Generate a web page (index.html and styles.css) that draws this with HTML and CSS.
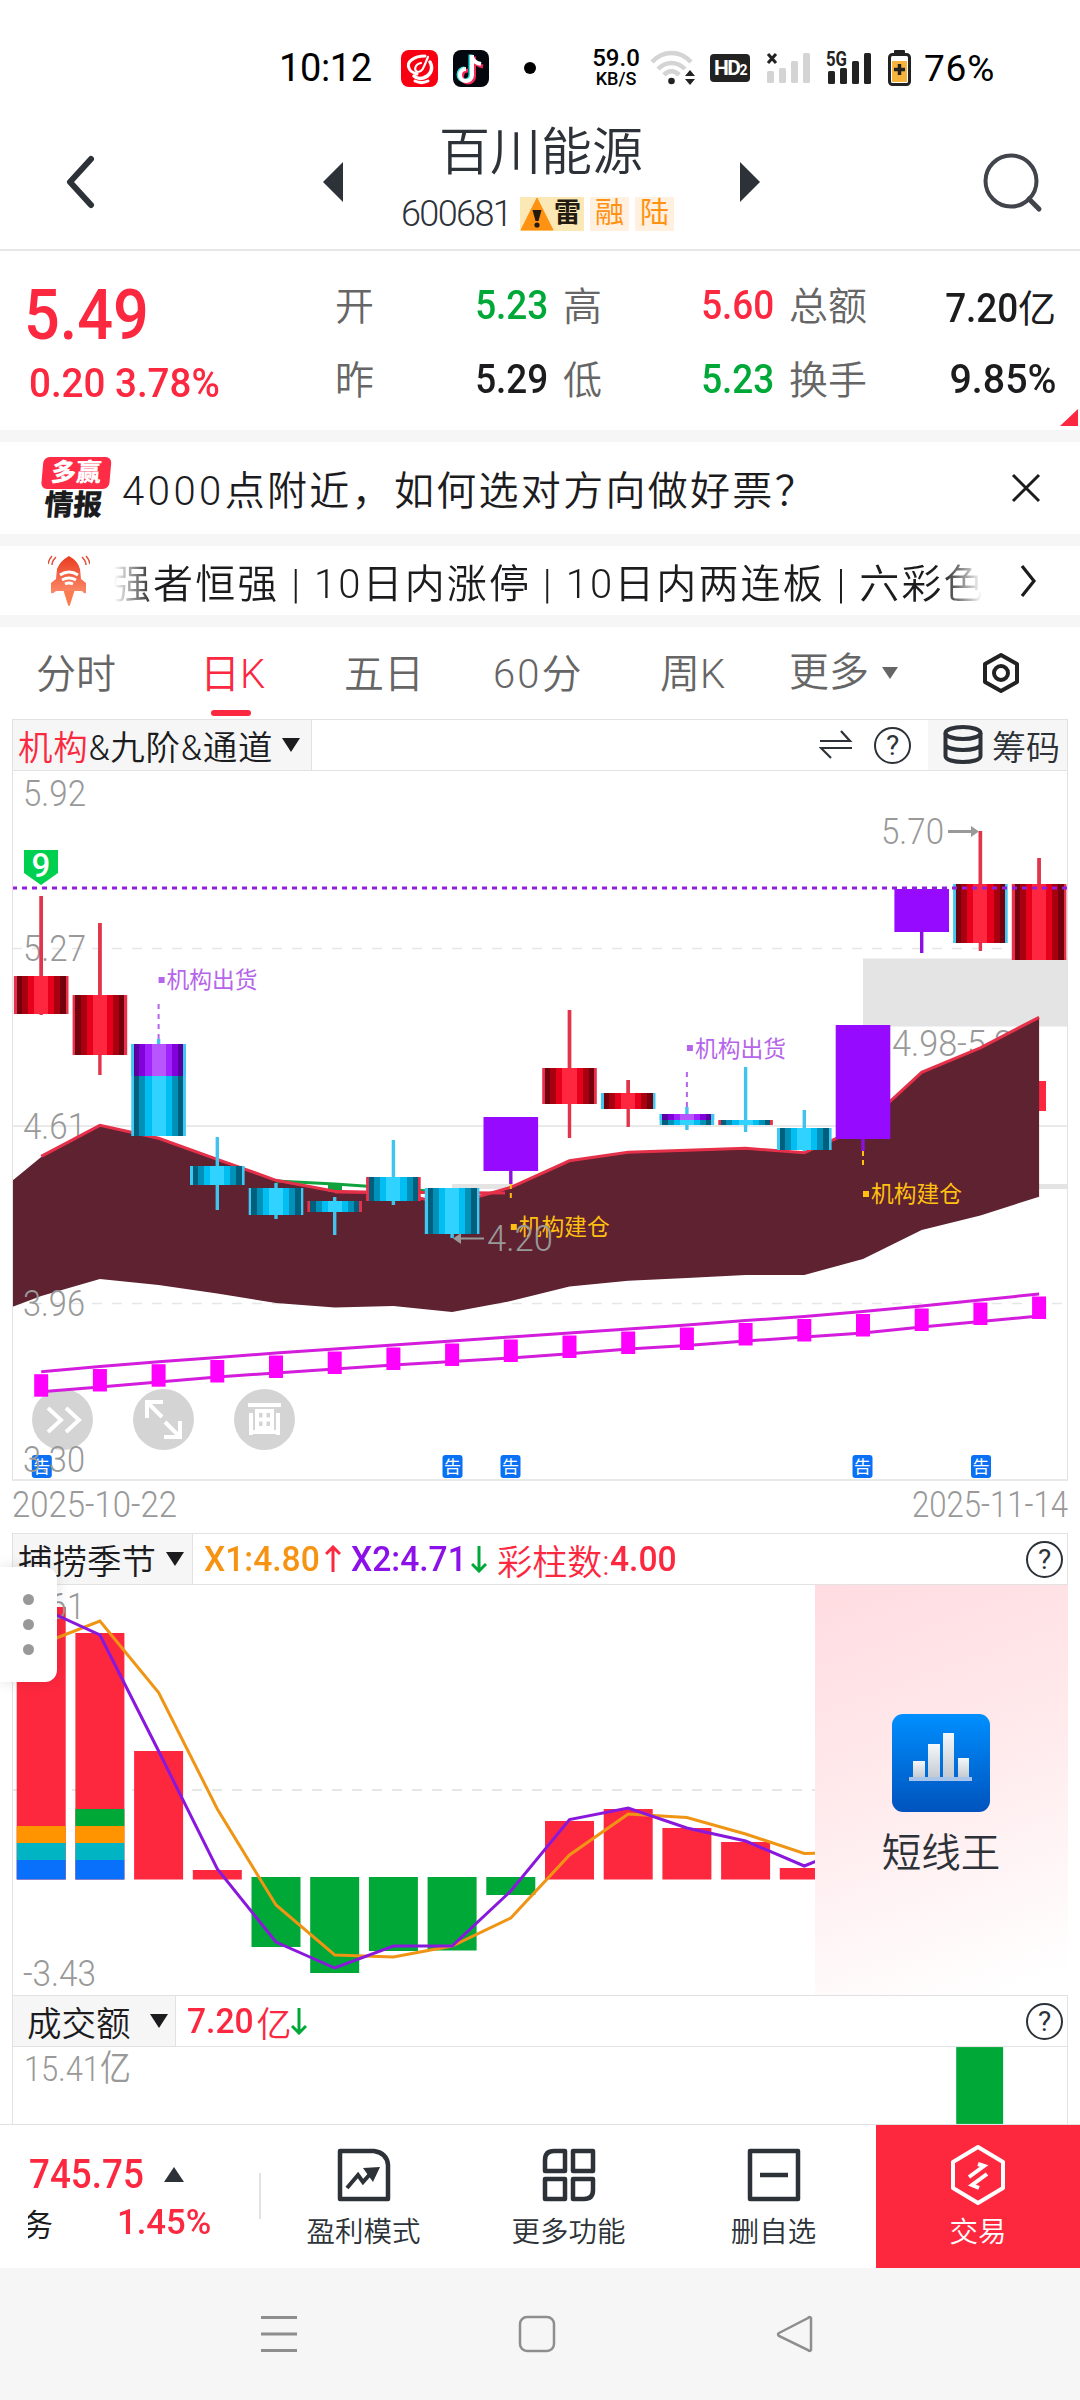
FILE: index.html
```html
<!DOCTYPE html>
<html lang="zh-CN">
<head>
  <meta charset="UTF-8" />
  <title>百川能源 600681</title>
  <link rel="stylesheet" href="styles.css">
</head>
<body>
  <div class="status">
    <span class="time">10:12</span>
    <svg class="app-red" width="37" height="37" viewBox="0 0 37 37">
      <rect width="37" height="37" rx="8" fill="#f80012"/>
      <g fill="none" stroke="#fff" stroke-linecap="round">
        <path d="M24 6C13 6 5 12 8 18c1 4 5 5 8 6" stroke-width="3"/>
        <path d="M29 12c4 7 0 14-7 16-4 1-7 0-9-2" stroke-width="3.500"/>
        <path d="M20 13c-6 1-8 8-3 9 5 0 6-6 10-15" stroke-width="2.200"/>
        <path d="M14 31c4 2 9 2 13 0" stroke-width="3"/>
      </g>
    </svg>
    <svg class="app-tik" width="36" height="37" viewBox="0 0 36 37">
      <rect width="36" height="37" rx="8" fill="#05070f"/>
      <g fill="none" stroke-width="4">
        <path d="M19 5v20a6 6 0 1 1-6-6M19 8c1 4 4 6 9 7" stroke="#2ee6e0" transform="translate(-1.5 -.5)"/>
        <path d="M19 5v20a6 6 0 1 1-6-6M19 8c1 4 4 6 9 7" stroke="#f3295a" transform="translate(2 1.5)"/>
        <path d="M19 5v20a6 6 0 1 1-6-6M19 7c1 4 4 6 9 7" stroke="#fff"/>
      </g>
    </svg>
    <span class="dot"></span>
    <span class="speed"><b>59.0</b><i>KB/S</i></span>
    <svg class="wifi" width="46" height="36" viewBox="0 0 46 36">
      <g fill="none" stroke="#d4d4d4" stroke-width="4.5">
        <path d="M2 12c11-12 28-12 39 0"/>
        <path d="M8 19c8-8 19-8 27 0"/>
        <path d="M14 25c4-5 11-5 15 0"/>
      </g>
      <circle cx="21.500" cy="31" r="3.300" fill="#222"/>
      <path d="M40 20l5 6H35zM40 35l5-6H35z" fill="#222"/>
    </svg>
    <span class="hd">HD<small>2</small></span>
    <svg class="sig" width="44" height="32" viewBox="0 0 44 32">
      <path d="M2 2l8 9M10 2l-8 9" stroke="#222" stroke-width="3"/>
      <g fill="#d4d4d4"><rect x="1" y="19" width="7" height="12" rx="1.500"/><rect x="13" y="16" width="7" height="15" rx="1.500"/><rect x="25" y="9" width="7" height="22" rx="1.500"/><rect x="37" y="1" width="7" height="30" rx="1.500"/></g>
    </svg>
    <svg class="sig5" width="48" height="38" viewBox="0 -4 48 38">
      <text x="1" y="13" class="g5" textLength="21" lengthAdjust="spacingAndGlyphs">5G</text>
      <g fill="#222"><rect x="3" y="18" width="7" height="13" rx="1.500"/><rect x="15" y="15" width="7" height="16" rx="1.500"/><rect x="27" y="8" width="7" height="23" rx="1.500"/><rect x="39" y="0" width="7" height="31" rx="1.500"/></g>
    </svg>
    <svg class="batt" width="23" height="36" viewBox="0 0 23 36">
      <rect x="6" y="0" width="11" height="5" rx="1" fill="#222"/>
      <rect x="1.500" y="4.500" width="20" height="30" rx="3" fill="#fff" stroke="#222" stroke-width="3"/>
      <rect x="4" y="11" width="15" height="21" fill="#f7b43c"/>
      <path d="M11.500 14v11M6 19.500h11" stroke="#222" stroke-width="3.500"/>
    </svg>
    <span class="pct">76%</span>
  </div>

  <header class="header">
    <svg class="back" width="32" height="54" viewBox="0 0 32 54"><path d="M25 4L4 27l21 23" fill="none" stroke="#2c3238" stroke-width="6" stroke-linecap="round" stroke-linejoin="round"/></svg>
    <svg class="prev" width="21" height="42" viewBox="0 0 21 42"><path d="M20 1v40L0 21z" fill="#2c3238"/></svg>
    <div class="title">
      <h1>百川能源</h1>
      <div class="code">
        <span class="code-num">600681</span>
        <span class="tag tag-warn"><svg width="34" height="34" viewBox="0 0 34 34"><path d="M17 1l16 32H1z" fill="#ff9212" stroke="#ff9212" stroke-linejoin="round"/><path d="M12.500 13h9l-3 11h-3z" fill="#231a10"/><circle cx="17" cy="28" r="2.600" fill="#231a10"/></svg><span>雷</span></span>
        <span class="tag">融</span>
        <span class="tag">陆</span>
      </div>
    </div>
    <svg class="next" width="21" height="42" viewBox="0 0 21 42"><path d="M1 1v40l20-20z" fill="#2c3238"/></svg>
    <svg class="search" width="60" height="60" viewBox="0 0 60 60"><g fill="none" stroke="#41444b" stroke-width="4"><circle cx="28" cy="28" r="25.500"/><path d="M46 46l10 10" stroke-width="5" stroke-linecap="round"/></g></svg>
  </header>

  <section class="quote">
    <div class="price">
      <div class="last"><span class="din">5.49</span></div>
      <div class="chg"><span class="din">0.20 3.78%</span></div>
    </div>
    <div class="facts">
      <span class="lb">开</span><span class="val down"><span class="din">5.23</span></span>
      <span class="lb">高</span><span class="val up"><span class="din">5.60</span></span>
      <span class="lb">总额</span><span class="val"><span class="din">7.20</span><em>亿</em></span>
      <span class="lb">昨</span><span class="val"><span class="din">5.29</span></span>
      <span class="lb">低</span><span class="val down"><span class="din">5.23</span></span>
      <span class="lb">换手</span><span class="val"><span class="din wide">9.85%</span></span>
    </div>
    <svg class="corner" width="18" height="18" viewBox="0 0 18 18"><path d="M18 0v17H0z" fill="#fb2840"/></svg>
  </section>

  <div class="banner banner-news">
    <div class="logo"><span class="logo-top">多赢</span><span class="logo-bot">情报</span></div>
    <span class="news"><span class="n4">4000</span>点附近，如何选对方向做好票？</span>
    <svg class="close" width="30" height="30" viewBox="0 0 30 30"><path d="M2 2l26 26M28 2L2 28" stroke="#1c1c1e" stroke-width="3"/></svg>
  </div>

  <div class="banner banner-hot">
    <svg class="rocket" width="42" height="52" viewBox="0 0 42 52">
      <defs><linearGradient id="rk" x2="0" y2="1"><stop offset="0" stop-color="#ea3b20"/><stop offset="1" stop-color="#fb8a68"/></linearGradient></defs>
      <path d="M15 34h12l-5 16q-1 2-2 0z" fill="#fb7b4f"/>
      <path d="M21 1q9 5 11 13l1 10 5 4v10q-2 1-4-2H8q-3 3-5 2V28l5-4 1-10q3-8 12-13z" fill="url(#rk)"/>
      <g fill="none" stroke="#fff" stroke-width="3"><path d="M12 20q9-6 18 0M14 25q7-4 14 0M17 29q4-2 8 0"/></g>
      <g fill="none" stroke="#e0503a" stroke-width="1.500"><path d="M0 9q1-5 4-8M4 10q0-4 4-8M42 9q-1-5-4-8M38 10q0-4-4-8"/></g>
    </svg>
    <div class="ticker">强者恒强 | 10日内涨停 | 10日内两连板 | 六彩色</div>
    <svg class="more" width="17" height="34" viewBox="0 0 17 34"><path d="M2 2l12 15L2 32" fill="none" stroke="#1c1c1e" stroke-width="3.200"/></svg>
  </div>

  <nav class="tabs">
    <span class="tab t1">分时</span>
    <span class="tab t2 active">日K</span>
    <span class="tab t3">五日</span>
    <span class="tab t4">60分</span>
    <span class="tab t5">周K</span>
    <span class="tab t6">更多<i class="tri"></i></span>
    <svg class="gear" width="38" height="42" viewBox="0 0 38 42"><g fill="none" stroke="#222" stroke-width="4"><path d="M19 3l16 9v18l-16 9-16-9V12z" stroke-linejoin="round"/><circle cx="19" cy="21" r="7"/></g></svg>
  </nav>

  <main class="panel">
    <div class="bar">
      <div class="pick pick-main"><span class="up">机构</span>&amp;九阶&amp;通道<i class="tri"></i></div>
      <svg class="swap" width="34" height="32" viewBox="0 0 34 32"><g fill="none" stroke="#2c3238" stroke-width="2.200"><path d="M1 12h30L22 2M33 19H2l10 10"/></g></svg>
      <span class="help">?</span>
      <div class="chips">
        <svg width="40" height="40" viewBox="0 0 40 40"><g fill="none" stroke="#2c3238" stroke-width="4"><ellipse cx="20" cy="8" rx="17.500" ry="6"/><path d="M2.500 8v23c0 8 35 8 35 0V8M2.500 19c0 8 35 8 35 0"/></g></svg>
        <span>筹码</span>
      </div>
    </div>
    <svg id="kline" class="kline" width="1056" height="762" viewBox="12 771 1056 762"></svg>

    <div class="bar bar-top">
      <div class="pick pick-sub">捕捞季节<i class="tri"></i></div>
      <div class="legend">
        <span class="din orange">X1:4.80</span><svg class="arw" width="16" height="28" viewBox="0 0 16 28"><path d="M8 27V2M1 9l7-7 7 7" fill="none" stroke="#fb2840" stroke-width="3"/></svg>
        <span class="din purple">X2:4.71</span><svg class="arw" width="16" height="28" viewBox="0 0 16 28"><path d="M8 1v25M1 19l7 7 7-7" fill="none" stroke="#00a838" stroke-width="3"/></svg>
        <span class="up">彩柱数:</span><span class="din up">4.00</span>
      </div>
      <span class="help">?</span>
    </div>
    <div class="season">
      <svg id="season" width="803" height="409" viewBox="12 1585 803 409"></svg>
      <div class="promo">
        <svg width="98" height="98" viewBox="0 0 98 98">
          <defs>
            <linearGradient id="pb" x2="0" y2="1"><stop offset="0" stop-color="#008fff"/><stop offset="1" stop-color="#0053bd"/></linearGradient>
            <linearGradient id="pw" x2="0" y2="1"><stop offset="0" stop-color="#f4f8fc"/><stop offset="1" stop-color="#c3c9d0"/></linearGradient>
          </defs>
          <rect width="98" height="98" rx="11" fill="url(#pb)"/>
          <g fill="url(#pw)"><rect x="21" y="47" width="12" height="17"/><rect x="36" y="30" width="12" height="34"/><rect x="51" y="19" width="11" height="45"/><rect x="66" y="44" width="11" height="20"/></g>
          <rect x="17" y="63" width="63" height="4" fill="#a9c4ea"/>
        </svg>
        <span>短线王</span>
      </div>
    </div>

    <div class="bar">
      <div class="pick pick-vol">成交额<i class="tri"></i></div>
      <div class="legend">
        <span class="din up">7.20</span><span class="up yi">亿</span><svg class="arw" width="16" height="28" viewBox="0 0 16 28"><path d="M8 1v25M1 19l7 7 7-7" fill="none" stroke="#00a838" stroke-width="3"/></svg>
      </div>
      <span class="help">?</span>
    </div>
    <svg class="volume" width="1056" height="77" viewBox="12 2047 1056 77">
      <rect x="957" y="2047" width="47" height="77" fill="#00a838"/>
      <text x="23" y="2081" class="axis" textLength="107" lengthAdjust="spacingAndGlyphs">15.41亿</text>
    </svg>
  </main>

  <div class="handle"><i></i><i></i><i></i></div>

  <footer class="tools">
    <div class="index">
      <div class="idx-row"><span class="din up">745.75</span><i class="tri-up"></i></div>
      <div class="idx-row2"><span class="cut">务</span><span class="din wide up">1.45%</span></div>
    </div>
    <div class="tool">
      <svg width="54" height="54" viewBox="0 0 54 54"><path d="M3 3h34q13 2 14 14v34H3z" fill="none" stroke="#2c3238" stroke-width="4.500" stroke-linejoin="round"/><path d="M10 40l11-13 5 7 8-9" fill="none" stroke="#2c3238" stroke-width="4"/><path d="M26 20l17-1-7 15z" fill="#2c3238"/></svg>
      <span>盈利模式</span>
    </div>
    <div class="tool">
      <svg width="54" height="54" viewBox="0 0 54 54"><g fill="none" stroke="#2c3238" stroke-width="4.500" stroke-linejoin="round"><path d="M12 3h11v20H3V12q0-9 9-9zM31 3h20v20H31zM3 31h20v20H3zM31 31h20v11q0 9-9 9H31z"/></g></svg>
      <span>更多功能</span>
    </div>
    <div class="tool">
      <svg width="54" height="54" viewBox="0 0 54 54"><path d="M3 3h48v48H3zM13 27h28" fill="none" stroke="#2c3238" stroke-width="4.500" stroke-linejoin="round"/></svg>
      <span>删自选</span>
    </div>
    <div class="tool trade">
      <svg width="56" height="62" viewBox="0 0 56 62"><path d="M28 3l25 15v26L28 59 3 44V18z" fill="none" stroke="#fff" stroke-width="4" stroke-linejoin="round"/><path d="M19 33l15-11-6-2M37 30L22 41l7 3" fill="none" stroke="#fff" stroke-width="4"/></svg>
      <span>交易</span>
    </div>
  </footer>

  <div class="sysnav">
    <svg width="38" height="38" viewBox="0 0 38 38"><path d="M1 2.500h36M1 19h36M1 35.500h36" stroke="#8e8e8e" stroke-width="3"/></svg>
    <svg width="38" height="38" viewBox="0 0 38 38"><rect x="2" y="2" width="34" height="34" rx="7" fill="none" stroke="#8e8e8e" stroke-width="2.500"/></svg>
    <svg width="38" height="38" viewBox="0 0 38 38"><path d="M35 3v32q-1 2-3 0L3 21q-2-2 0-3L32 3q2-2 3 0z" fill="none" stroke="#8e8e8e" stroke-width="2.500"/></svg>
  </div>

  <script>
    const STEP = 58.7;
    const cx = (i) => 41.2 + STEP * i;
    const pts = (ys, x0) => ys.map((y, i) => cx(i + (x0 || 0)).toFixed(1) + "," + y).join(" ");
    const rect = (x, y, w, h, fill) => `<rect x="${x}" y="${y}" width="${w}" height="${h}" fill="${fill}"/>`;
    const line = (x1, y1, x2, y2, c, w, dash) =>
      `<line x1="${x1}" y1="${y1}" x2="${x2}" y2="${y2}" stroke="${c}" stroke-width="${w}"${dash ? ` stroke-dasharray="${dash}"` : ""}/>`;
    const poly = (p, c, w) => `<polyline points="${p}" fill="none" stroke="${c}" stroke-width="${w}"/>`;
    const text = (x, y, s, cls, len) => `<text x="${x}" y="${y}" class="${cls}" textLength="${len}" lengthAdjust="spacingAndGlyphs">${s}</text>`;

    // 柱体渐变: 由深到浅再到深
    function grad(id, c) {
      const cut = [0, 5, 15, 26, 37, 63, 74, 85, 95, 100];
      const order = [0, 1, 2, 3, 4, 3, 2, 1, 0];
      let s = "";
      order.forEach((k, i) => {
        s += `<stop offset="${cut[i]}%" stop-color="${c[k]}"/><stop offset="${cut[i + 1]}%" stop-color="${c[k]}"/>`;
      });
      return `<linearGradient id="${id}">${s}</linearGradient>`;
    }

    const red = ["#74000d", "#a90010", "#e6001c", "#ff273f"];
    const blue = ["#005f7c", "#0090b8", "#00bdf2", "#30d2ff"];
    const defs = "<defs>" +
      grad("rr", ["#e8304a"].concat(red)) + grad("rc", ["#40c8f0"].concat(red)) +
      grad("bb", ["#40c8f0"].concat(blue)) + grad("br", ["#e8304a"].concat(blue)) +
      grad("pp", ["#40c8f0", "#5a00a0", "#8200dc", "#a022ff", "#b755ff"]) + "</defs>";

    // [类型, 上影, 实体上, 实体下, 下影, 紫色下沿]
    const candles = [
      ["rr", 896, 976, 1014, 1015], ["rr", 923, 995, 1055, 1075], ["bb", 1039, 1044, 1136, 1136, 1076],
      ["bb", 1137, 1166, 1185, 1210], ["bb", 1183, 1188, 1215, 1219], ["br", 1197, 1201, 1212, 1235],
      ["br", 1140, 1177, 1201, 1205], ["bb", 1188, 1188, 1234, 1238], ["v", 1117, 1117, 1171, 1184],
      ["rr", 1010, 1068, 1104, 1138], ["rc", 1080, 1093, 1109, 1127], ["bb", 1107, 1114, 1125, 1130, 1120],
      ["br", 1067, 1120, 1125, 1132], ["bb", 1110, 1128, 1150, 1151], ["v", 1025, 1025, 1139, 1151],
      ["v", 889, 889, 932, 953], ["rc", 831, 884, 943, 951], ["rr", 858, 884, 960, 960]
    ];
    const areaTop = [1157, 1126, 1139, 1160, 1181, 1192, 1194, 1205, 1188, 1161.5, 1153, 1151, 1149, 1153.5, 1127, 1073, 1048.5, 1018];
    const areaBottom = [1296, 1279, 1285, 1293.5, 1303, 1307.5, 1306, 1312, 1301, 1286.6, 1280.7, 1278, 1275, 1275, 1259, 1230, 1215.5, 1196.7];
    const upLine = [1371.7, 1366.5, 1361.7, 1357.5, 1353, 1349, 1345, 1341, 1337, 1333, 1329, 1325, 1320.5, 1316.5, 1311.5, 1306, 1300, 1294];
    const lowLine = [1391.7, 1387, 1382, 1377, 1373, 1369, 1365, 1361.5, 1358, 1353.7, 1349, 1345.5, 1341, 1337, 1333, 1327, 1321.5, 1316];

    let k = defs;
    k += line(12, 948.5, 1068, 948.5, "#e6e6e6", 1.5, "10 10") + line(12, 1126, 1068, 1126, "#eaeaea", 2) + line(12, 1303.5, 1068, 1303.5, "#e6e6e6", 1.5, "10 10");
    k += text(23, 806, "5.92", "axis", 63) + text(23, 961, "5.27", "axis", 63) + text(23, 1139, "4.61", "axis", 63);
    k += rect(863, 958.5, 205, 68, "#e4e4e4") + rect(452, 1184, 616, 5, "#e4e4e4");
    k += text(892, 1056, "4.98-5.23", "axis", 140) + rect(1030, 1081, 16, 30, "#fb2840");
    k += `<polygon points="12,1181 ${pts(areaTop)} ${pts(areaBottom).split(" ").reverse().join(" ")} 12,1307" fill="#5e2231"/>`;
    k += poly(pts([1181, 1184, 1188, 1193], 4), "#10a23c", 3) + rect(328, 1184, 14, 8, "#10a23c");
    k += poly("335,1192 505,1193", "#e5304a", 3);
    k += poly(pts(areaTop.map((y) => y - 0.7)), "#e5304a", 3);

    k += `<g fill="#d4d4d4"><circle cx="62.500" cy="1419.500" r="30.500"/><circle cx="163.500" cy="1419.500" r="30.500"/><circle cx="264.500" cy="1419.500" r="30.500"/></g>`;
    k += `<g fill="none" stroke="#fff" stroke-width="4"><path d="M48 1408l13 12-13 12M66 1408l13 12-13 12"/>
      <path d="M147 1418v-16h16M147 1402l15 15M180 1421v16h-16M180 1437l-15-15" />
      <path d="M248 1405h33M251 1413v22M278 1413v22M251 1432h27M257 1411h15v17h-15zM264.500 1411v17M257 1419.500h15"/></g>`;

    k += poly(pts(upLine), "#d41cdc", 3) + poly(pts(lowLine), "#d41cdc", 3);
    upLine.forEach((y, i) => { k += rect(cx(i) - 7, y + 2.5, 14, 22.5, "#ff00ff"); });

    candles.forEach((c, i) => {
      const color = c[0] == "v" ? "#8c10e0" : c[0][0] == "r" ? "#e0354a" : "#40c4ec";
      k += line(cx(i), c[1], cx(i), c[4], color, 3.4);
      k += rect(cx(i) - 27.3, c[2], 54.6, c[3] - c[2], c[0] == "v" ? "#960aff" : `url(#${c[0]})`);
      if (c[5]) k += rect(cx(i) - 27.3, c[2], 54.6, c[5] - c[2], "url(#pp)");
      // 实体上方的影线要盖住边缘
      if (c[0][0] == "r") k += line(cx(i), c[1], cx(i), c[2], color, 3.4);
    });
    k += line(12, 888, 1068, 888, "#921edc", 3, "5 5");

    k += line(158.6, 1004, 158.6, 1040, "#b565ea", 2, "5 5") + line(686.9, 1072, 686.9, 1107, "#b565ea", 2, "5 5");
    k += line(510.8, 1184, 510.8, 1199, "#ffc010", 2, "5 4") + line(863, 1151, 863, 1166, "#ffc010", 2, "5 4");
    [[158.6, 977, 986, "机构出货", "sell"], [686.9, 1045, 1055, "机构出货", "sell"], [510.8, 1224, 1233, "机构建仓", "buy"], [863, 1191, 1200, "机构建仓", "buy"]].forEach((m) => {
      k += `<rect x="${m[0]}" y="${m[1]}" width="6" height="6" class="${m[4]}"/>` + text(m[0] + 8, m[2] + 1.5, m[3], "mark " + m[4], 91);
    });

    k += text(881, 844, "5.70", "axis", 63) + line(948, 831.5, 973, 831.5, "#999", 3) + `<path d="M971 826l8 5.500-8 5.500z" fill="#999"/>`;
    k += text(487, 1251, "4.20", "axis", 66) + line(458, 1238.5, 484, 1238.5, "#999", 2) + `<path d="M461 1233l-8 5.500 8 5.500z" fill="#999"/>`;
    k += `<path d="M24 850h34v23l-17 12-17-12z" fill="#00d050"/><text x="41" y="877" text-anchor="middle" class="nine">9</text>`;

    [41.8, 452.5, 510.5, 862.5, 981].forEach((x) => {
      k += `<rect x="${x - 10}" y="1455" width="20" height="23" rx="3" fill="#0a70f4"/><text x="${x}" y="1473" text-anchor="middle" class="gao">告</text>`;
    });
    k += text(23, 1316, "3.96", "axis", 62) + text(23, 1472, "3.30", "axis", 62);
    k += line(12, 1480, 1068, 1480, "#e2e2e2", 1.5);
    k += text(12, 1517, "2025-10-22", "axis", 165) + text(912, 1517, "2025-11-14", "axis", 156);
    k += line(12.5, 771, 12.5, 1480, "#e2e2e2", 1) + line(1067.5, 771, 1067.5, 1480, "#e2e2e2", 1);
    document.getElementById("kline").innerHTML = k;

    // 捕捞季节
    const bars = [1607, 1633, 1751, 1870, -1947, -1973, -1951, -1950.5, -1895, 1821, 1809, 1828, 1842, 1868];
    const x1 = [1644, 1621, 1692.5, 1809, 1905, 1955, 1957, 1946, 1918, 1855, 1814, 1817.5, 1834, 1853.5, 1852];
    const x2 = [1608, 1635, 1751, 1869, 1942, 1968, 1946, 1946, 1891, 1819.5, 1808, 1828, 1841, 1866, 1842];
    let s = line(12, 1790, 815, 1790, "#e6e6e6", 2, "10 10");
    bars.forEach((b, i) => {
      s += b > 0 ? rect(cx(i) - 24.5, b, 49, 1879.5 - b, "#fe283e") : rect(cx(i) - 24.5, 1877, 49, -b - 1877, "#00a838");
    });
    [0, 1].forEach((i) => {
      const x = cx(i) - 24.5;
      if (i) s += rect(x, 1809, 49, 17, "#00a838");
      s += rect(x, 1826, 49, 17, "#ff9300") + rect(x, 1843, 49, 17, "#00b4c4") + rect(x, 1860, 49, 19.5, "#0870fa");
    });
    s += text(23, 1619, "9.61", "axis", 62) + text(23, 1986, "-3.43", "axis", 73);
    s += poly(pts(x1), "#f09414", 3) + poly(pts(x2), "#8a18dc", 3);
    document.getElementById("season").innerHTML = s;
  </script>
</body>
</html>
```

FILE: styles.css
```css
* {
  box-sizing: border-box;
}

body {
  margin: 0;
  width: 1080px;
  height: 2400px;
  overflow: hidden;
  position: relative;
  background: #fff;
  color: #1c1c1e;
  font-family: Roboto, "Noto Sans CJK SC", sans-serif;
  font-weight: 350;
}

svg {
  display: block;
  flex: none;
}

i, em {
  font-style: normal;
}

.up { color: #fb2840; }
.down { color: #00a838; }
.orange { color: #f79312; }
.purple { color: #8c10e8; }

.din {
  display: inline-block;
  font-weight: 500;
  transform: scaleX(.9);
  transform-origin: left center;
}

.tri {
  border: 9px solid transparent;
  border-top: 14px solid #1c1c1e;
  border-bottom: 0;
}

/* 状态栏 */
.status {
  display: flex;
  align-items: center;
  height: 126px;
  padding: 10px 0 0 279px;
  color: #000;
}

.time {
  width: 92px;
  font-size: 38px;
  font-weight: 400;
  letter-spacing: -.4px;
}

.app-red { margin-left: 30px; }
.app-tik { margin-left: 15px; }

.dot {
  width: 12px;
  height: 12px;
  margin-left: 35px;
  border-radius: 50%;
  background: #000;
}

.speed {
  display: flex;
  flex-direction: column;
  width: 48px;
  margin-left: 56px;
  text-align: center;
}

.speed b {
  font-size: 24px;
  line-height: 21px;
  font-weight: 500;
}

.speed i {
  font-size: 18px;
  line-height: 19px;
  font-weight: 500;
}

.wifi { margin-left: 10px; }

.hd {
  width: 40px;
  height: 28px;
  margin-left: 14px;
  border-radius: 4px;
  background: #222;
  color: #fff;
  font-size: 21px;
  font-weight: 700;
  line-height: 28px;
  text-align: center;
  letter-spacing: -1.5px;
}

.hd small { font-size: 14px; }
.sig { margin-left: 16px; }
.sig5 { margin-left: 15px; }

.g5 {
  font-size: 20px;
  font-weight: 700;
  fill: #222;
}

.batt { margin-left: 15px; }

.pct {
  margin-left: 13px;
  font-size: 37px;
  font-weight: 400;
  letter-spacing: .8px;
}

/* 标题 */
.header {
  display: flex;
  height: 125px;
  border-bottom: 2px solid #e6e6e8;
}

.back { margin: 29px 0 0 66px; }
.prev { margin: 35px 0 0 225px; }
.next { margin: 35px 0 0 48px; }
.search { margin: 27px 0 0 223px; }

.title {
  width: 290px;
  margin-left: 57px;
  padding-top: 4px;
}

.title h1 {
  margin: 0 0 21px 38px;
  color: #2c3238;
  font-size: 51px;
  font-weight: 350;
  line-height: 46px;
}

.code {
  display: flex;
  align-items: center;
  height: 34px;
}

.code-num {
  flex: none;
  width: 119px;
  color: #2c3238;
  font-size: 36px;
  letter-spacing: -1.6px;
}

.tag {
  flex: none;
  width: 39px;
  height: 34px;
  margin-right: 6px;
  background: #fff0e0;
  color: #ff9212;
  font-size: 29px;
  font-weight: 400;
  line-height: 32px;
  text-align: center;
}

.tag-warn {
  display: flex;
  width: 64px;
  background: #fbe8b4;
  color: #231a10;
  font-size: 27px;
  font-weight: 700;
}

/* 报价 */
.quote {
  display: flex;
  position: relative;
  height: 179px;
}

.price {
  width: 335px;
  padding-left: 24px;
  color: #fb2840;
}

.last {
  height: 104px;
  padding-top: 24px;
  font-size: 70px;
  line-height: 80px;
}

.last .din { font-weight: 500; }

.chg {
  padding-left: 5px;
  font-size: 41px;
  line-height: 56px;
}

.chg .din { transform: scaleX(.94); }

.facts {
  display: grid;
  grid-template-columns: 90px 138px 90px 136px 106px 161px;
  grid-template-rows: 74px 74px;
  align-content: start;
  align-items: center;
  width: 721px;
  padding-top: 17px;
  font-size: 41px;
}

.lb {
  padding-bottom: 5px;
  color: #666;
  font-size: 39px;
}

.val {
  padding-right: 15px;
  text-align: right;
  white-space: nowrap;
}

.val:nth-child(6n) { padding-right: 0; }
.val .din { transform-origin: right center; }
.val .wide { transform: scaleX(.96); }

.val em {
  font-size: 38px;
  font-weight: 400;
}

.corner {
  position: absolute;
  right: 2px;
  bottom: 3px;
}

/* 横幅 */
.banner {
  display: flex;
  align-items: center;
  border-top: 12px solid #f6f6f6;
}

.banner-news { height: 104px; }

.logo {
  display: flex;
  flex-direction: column;
  width: 68px;
  margin-left: 41px;
  text-align: center;
  transform: skewX(-5deg);
}

.logo-top {
  height: 32px;
  border-radius: 6px;
  background: #fe2c46;
  color: #fff;
  font-size: 25px;
  font-weight: 900;
  line-height: 31px;
}

.logo-bot {
  height: 30px;
  font-size: 29px;
  font-weight: 900;
  line-height: 33px;
}

.news {
  width: 902px;
  padding-left: 13px;
  font-size: 40px;
  letter-spacing: 2.3px;
  white-space: nowrap;
}

.n4 { letter-spacing: 3.5px; }

.banner-hot {
  height: 93px;
  border-bottom: 12px solid #f6f6f6;
}

.rocket { margin-left: 48px; }

.ticker {
  width: 868px;
  margin-left: 24px;
  overflow: hidden;
  white-space: nowrap;
  font-size: 40px;
  letter-spacing: 2.1px;
  text-indent: -3px;
  -webkit-mask-image: linear-gradient(90deg, transparent, #000 40px, #000 828px, transparent);
  mask-image: linear-gradient(90deg, transparent, #000 40px, #000 828px, transparent);
}

.more { margin-left: 38px; }

/* 周期 */
.tabs {
  display: flex;
  height: 92px;
  padding-left: 36px;
  color: #666;
  font-size: 40px;
  line-height: 96px;
}

.tab { white-space: nowrap; }
.t1 { width: 164px; }
.t2 { width: 144px; }

.t3 { width: 149px; }

.t4 {
  width: 167px;
  letter-spacing: 2px;
}

.t5 { width: 129px; }

.t6 {
  display: flex;
  align-items: center;
  width: 193px;
}

.t6 .tri {
  margin-left: 13px;
  border-width: 12px 8px 0;
  border-top-color: #666;
}

.active {
  position: relative;
  color: #fb2840;
}

.active::after {
  content: "";
  position: absolute;
  left: 11px;
  bottom: 3px;
  width: 40px;
  height: 6px;
  border-radius: 3px;
  background: #fb2840;
}

.gear { margin-top: 25px; }

/* 图表 */
.panel {
  width: 1056px;
  margin: 0 12px;
}

.bar {
  display: flex;
  align-items: center;
  height: 52px;
  border: 1px solid #e2e2e2;
}

.pick {
  display: flex;
  align-items: center;
  height: 50px;
  border-right: 1px solid #e2e2e2;
  background: #f6f6f6;
  font-size: 34.500px;
  white-space: nowrap;
}

.pick-main {
  width: 299px;
  padding-left: 5px;
  letter-spacing: .7px;
}

.pick-main .tri { margin-left: 9px; }

.swap { margin-left: 507px; }

.help {
  width: 37px;
  height: 37px;
  margin-right: 4px;
  border: 2.500px solid #2c3238;
  border-radius: 50%;
  color: #2c3238;
  font-size: 28px;
  font-weight: 400;
  line-height: 33px;
  text-align: center;
}

.swap + .help {
  margin-left: 21px;
  margin-right: 17px;
}

.chips {
  display: flex;
  align-items: center;
  gap: 9px;
  flex: 1;
  height: 50px;
  padding-left: 15px;
  background: #f6f6f6;
  color: #2c3238;
  font-size: 34px;
  white-space: nowrap;
}

.axis {
  fill: #999;
  font-size: 36px;
  font-weight: 350;
}

.mark {
  font-size: 23px;
  font-weight: 400;
}

.sell { fill: #b565ea; }
.buy { fill: #ffc010; }

.nine {
  fill: #fff;
  font-size: 33px;
  font-weight: 500;
}

.gao {
  fill: #fff;
  font-size: 17px;
  font-weight: 400;
}

.pick-sub {
  width: 180px;
  padding-left: 5px;
}

.pick-sub .tri { margin-left: 10px; }

.legend {
  display: flex;
  align-items: center;
  flex: 1;
  padding-left: 11px;
  font-size: 35px;
  white-space: nowrap;
}

.legend .din { transform: scaleX(.96); }
.arw { margin-right: 10px; }

.season {
  display: flex;
  height: 410px;
  border-left: 1px solid #e2e2e2;
}

.season > svg { margin-left: -1px; }

.promo {
  display: flex;
  flex-direction: column;
  align-items: center;
  width: 253px;
  padding: 129px 1px 0 0;
  background: linear-gradient(160deg, #ffdce1, #ffeaec 45%, #fff 95%);
  color: #2c3238;
  font-size: 39.500px;
}

.promo span {
  margin-top: 14px;
  line-height: 56px;
}

.pick-vol {
  width: 163px;
  padding-left: 14px;
}

.pick-vol .tri { margin-left: 19px; }

.volume {
  border-left: 1px solid #e2e2e2;
  border-right: 1px solid #e2e2e2;
}

.handle {
  position: absolute;
  left: 0;
  top: 1567px;
  display: flex;
  flex-direction: column;
  align-items: center;
  gap: 14px;
  width: 57px;
  height: 115px;
  padding-top: 27px;
  border-radius: 0 12px 12px 0;
  background: #fff;
  box-shadow: 0 0 14px rgba(0, 0, 0, .12);
}

.handle i {
  width: 11px;
  height: 11px;
  border-radius: 50%;
  background: #999;
}

/* 底部 */
.tools {
  display: flex;
  height: 144px;
  border-top: 1px solid #e2e2e2;
}

.index {
  width: 261px;
  height: 46px;
  margin-top: 48px;
  border-right: 2px solid #e2e2e2;
}

.idx-row {
  display: flex;
  align-items: center;
  height: 46px;
  margin-top: -22px;
  padding-left: 29px;
  font-size: 40px;
}

.idx-row .din {
  width: 135px;
  transform: scaleX(.92);
}

.tri-up {
  border: 10px solid transparent;
  border-bottom: 15px solid #2c3238;
  border-top: 0;
}

.idx-row2 {
  display: flex;
  align-items: center;
  height: 50px;
  padding-left: 28px;
  font-size: 35px;
}

.idx-row2 .din { transform: scaleX(.99); }

.cut {
  display: flex;
  justify-content: flex-end;
  width: 25px;
  margin-right: 64px;
  overflow: hidden;
  font-size: 31px;
  font-weight: 400;
}

.tool {
  display: flex;
  flex-direction: column;
  align-items: center;
  justify-content: flex-end;
  gap: 10px;
  width: 205px;
  padding-bottom: 14px;
  color: #2c3238;
  font-size: 28.500px;
  line-height: 42px;
}

.trade {
  width: 204px;
  gap: 6px;
  background: #fe283e;
  color: #fff;
}

.sysnav {
  display: flex;
  gap: 220px;
  height: 132px;
  padding: 47px 0 0 260px;
  background: #f6f6f6;
}
```
